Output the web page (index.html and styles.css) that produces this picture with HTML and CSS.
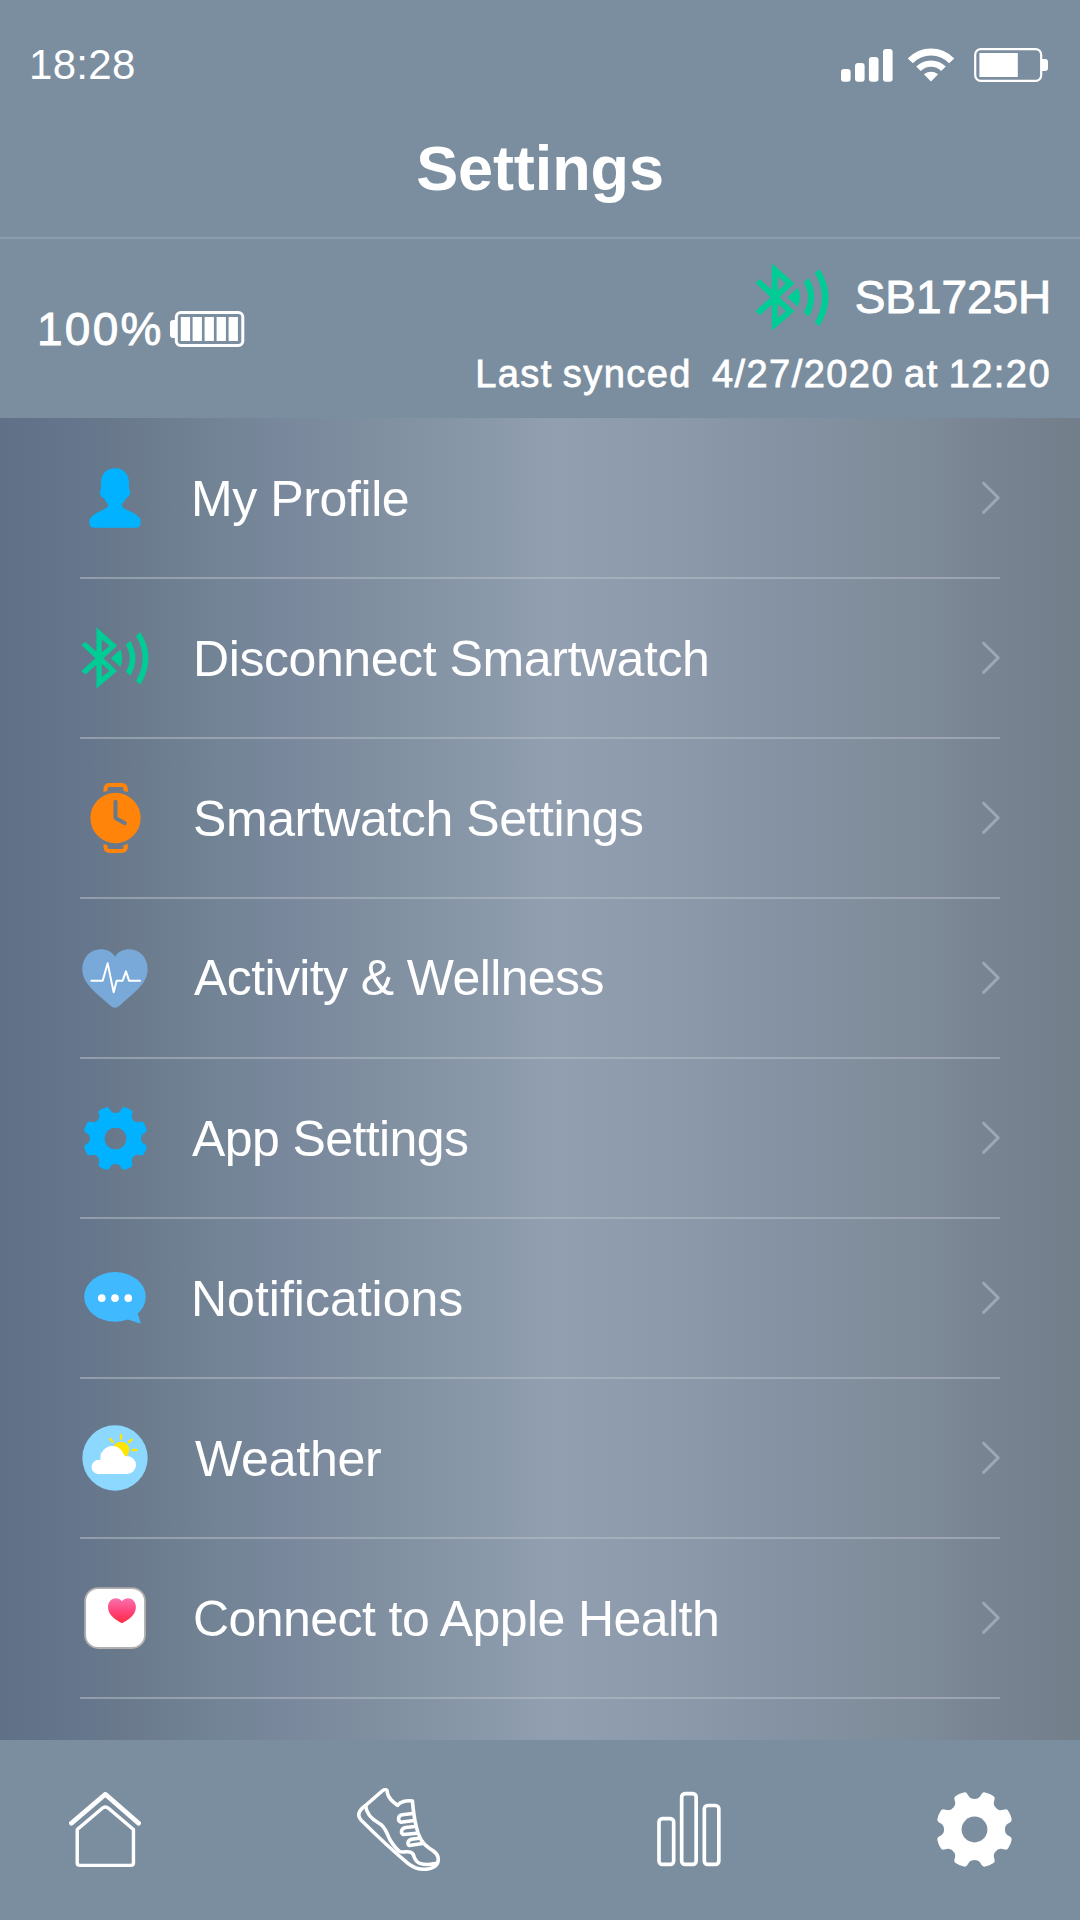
FILE: index.html
```html
<!DOCTYPE html>
<html lang="en">
<head>
<meta charset="utf-8">
<title>Settings</title>
<link rel="stylesheet" href="styles.css">
</head>
<body>
<svg class="sprite" aria-hidden="true">
  <defs>
    <symbol id="bluetooth" viewBox="64 561 203 185" preserveAspectRatio="none">
      <path fill="#00cc96" fill-rule="evenodd" d="M110 562L172 617L131 654L172 692L110 745L110 674L77 703L65 692L107 654L65 615L77 605L110 634ZM126 598L149 617L126 637ZM126 671L149 692L126 710Z"/>
      <path fill="#00cc96" d="M153 654L182 628Q192 654 182 680ZM211 602Q242 654 211 707L198 694Q221 654 198 614ZM241 577Q290 654 241 733L228 722Q268 654 228 588Z"/>
    </symbol>
    <path id="tooth" d="M0 0L-2 0L-2 -91L0 -91C8 -91 14 -94 17 -99L22 -107Q26 -113 34 -110Q44 -108 53.7 -101.8Q61.5 -98.3 60.1 -91.2L58 -82.1C56.6 -76.4 58.7 -70 64.3 -64.3Z"/>
    <mask id="gear-hole" maskUnits="userSpaceOnUse" x="-120" y="-120" width="240" height="240">
      <rect x="-120" y="-120" width="240" height="240" fill="#fff"/>
      <circle r="38.5" fill="#000"/>
    </mask>
    <symbol id="gear" viewBox="-112 -112 224 224">
      <g mask="url(#gear-hole)">
        <use href="#tooth"/>
        <use href="#tooth" transform="rotate(45)"/>
        <use href="#tooth" transform="rotate(90)"/>
        <use href="#tooth" transform="rotate(135)"/>
        <use href="#tooth" transform="rotate(180)"/>
        <use href="#tooth" transform="rotate(225)"/>
        <use href="#tooth" transform="rotate(270)"/>
        <use href="#tooth" transform="rotate(315)"/>
      </g>
    </symbol>
    <symbol id="chevron" viewBox="0 0 18 34">
      <path d="M1.6 2.2L16.2 16.8L1.6 31.4" fill="none" stroke="#9ba9b3" stroke-width="3" stroke-linecap="round" stroke-linejoin="round"/>
    </symbol>
  </defs>
</svg>

<div class="screen">
  <header class="header">
    <div class="status">
      <span class="time">18:28</span>
      <div class="status-icons">
        <svg class="signal" viewBox="0 0 52 34" width="52" height="34" fill="#fff">
          <rect x="0" y="21" width="9.6" height="12.7" rx="3"/><rect x="14" y="15" width="9.6" height="18.7" rx="3"/><rect x="27.9" y="9" width="9.6" height="24.7" rx="3"/><rect x="42" y="1" width="9.6" height="32.7" rx="3"/>
        </svg>
        <svg class="wifi" viewBox="0 0 46 34" width="46" height="34">
          <path d="M2.4 12.9A28.3 28.3 0 0 1 43.6 12.9" fill="none" stroke="#fff" stroke-width="7"/>
          <path d="M10.5 20.8A17.6 17.6 0 0 1 35.5 20.8" fill="none" stroke="#fff" stroke-width="6.4"/>
          <path d="M15.9 26.2Q23 21.4 30.1 26.2L23 33.6Z" fill="#fff"/>
        </svg>
        <svg class="battery" viewBox="0 0 75 34" width="75" height="34">
          <rect x="1.2" y="1.2" width="66" height="31.6" rx="5.5" fill="none" stroke="#fff" stroke-width="2.2"/>
          <rect x="5.4" y="5" width="38.4" height="24" fill="#fff"/>
          <path d="M68 11H71Q74 11 74 14V20Q74 23 71 23H68Z" fill="#fff"/>
        </svg>
      </div>
    </div>
    <h1 class="title">Settings</h1>
  </header>

  <section class="device">
    <div class="charge">
      <span class="charge-value">100%</span>
      <svg viewBox="0 0 75 36" width="75" height="36" fill="#fff">
        <rect x="6.3" y="1.5" width="66.5" height="33" rx="4.5" fill="none" stroke="#fff" stroke-width="3"/>
        <path d="M5 9H3Q0 9 0 12V24Q0 27 3 27H5Z"/>
        <rect x="10.8" y="6" width="9.3" height="24"/><rect x="22.6" y="6" width="9.3" height="24"/><rect x="34.6" y="6" width="9.3" height="24"/><rect x="46.6" y="6" width="9.3" height="24"/><rect x="58.6" y="6" width="9.3" height="24"/>
      </svg>
    </div>
    <div class="watch">
      <div class="watch-name">
        <svg class="watch-link"><use href="#bluetooth"/></svg>
        <span>SB1725H</span>
      </div>
      <div class="synced">Last synced&nbsp; 4/27/2020 at 12:20</div>
    </div>
  </section>

  <main class="panel">
    <a class="row row-profile">
      <span class="icon"><svg viewBox="87 84 156 179" width="52" height="60"><path fill="#00b2ff" d="M165 84C140 84 123 102 123 128L123 148C117 151 119 168 128 172C132 174 134 177 136 182C140 189 145 190 144 196C142 208 120 211 104 222C92 230 88 236 88 245C88 257 92 263 104 263L226 263C238 263 242 257 242 245C242 236 238 230 226 222C210 211 188 208 186 196C185 190 190 189 194 182C196 177 198 174 202 172C211 168 213 151 207 148L207 128C207 102 190 84 165 84Z"/></svg></span>
      <span class="label">My Profile</span><svg class="chevron"><use href="#chevron"/></svg>
    </a>
    <a class="row row-disconnect">
      <span class="icon"><svg class="bt-small"><use href="#bluetooth"/></svg></span>
      <span class="label">Disconnect Smartwatch</span><svg class="chevron"><use href="#chevron"/></svg>
    </a>
    <a class="row row-watch">
      <span class="icon"><svg viewBox="89 1029 152 210" width="51" height="70">
        <mask id="hands" maskUnits="userSpaceOnUse" x="80" y="1020" width="170" height="230"><rect x="80" y="1020" width="170" height="230" fill="#fff"/><path d="M165 1085V1134L193 1150" fill="none" stroke="#000" stroke-width="12" stroke-linecap="round" stroke-linejoin="round"/></mask>
        <g fill="#ff8409"><circle cx="165" cy="1134" r="75.5" mask="url(#hands)"/>
        <path id="strap" d="M129 1056V1046Q131 1029 147 1029H184Q200 1029 202 1046V1056L189 1052V1046Q189 1041 184 1041H147Q141 1041 141 1046V1052Z"/>
        <use href="#strap" transform="matrix(1 0 0 -1 0 2268)"/></g>
      </svg></span>
      <span class="label">Smartwatch Settings</span><svg class="chevron"><use href="#chevron"/></svg>
    </a>
    <a class="row row-wellness">
      <span class="icon"><svg viewBox="66 145 198 177" width="66" height="59"><path fill="#78a9d8" d="M165 168C155 153 140 146 122 146C91 146 67 171 67 206C67 246 100 270 151 315Q165 327 179 315C230 270 263 246 263 206C263 171 239 146 208 146C190 146 175 153 165 168Z"/><path d="M94 240H128L143 188L161 275L170 240H188L198 212L207 240H240" fill="none" stroke="#fff" stroke-width="6" stroke-linecap="round" stroke-linejoin="round"/></svg></span>
      <span class="label">Activity &amp; Wellness</span><svg class="chevron"><use href="#chevron"/></svg>
    </a>
    <a class="row row-app">
      <span class="icon"><svg class="gear-small"><use href="#gear"/></svg></span>
      <span class="label">App Settings</span><svg class="chevron"><use href="#chevron"/></svg>
    </a>
    <a class="row row-notifications">
      <span class="icon"><svg viewBox="72 95 186 157" width="62" height="52"><ellipse cx="165" cy="170" rx="93" ry="75" fill="#41b9ff"/><path d="M233 218L243 251L198 236Z" fill="#41b9ff"/><g fill="#fff"><circle cx="125" cy="174" r="11.5"/><circle cx="165" cy="174" r="11.5"/><circle cx="205" cy="174" r="11.5"/></g></svg></span>
      <span class="label">Notifications</span><svg class="chevron"><use href="#chevron"/></svg>
    </a>
    <a class="row row-weather">
      <span class="icon"><svg viewBox="66 555 198 198" width="66" height="66"><circle cx="165" cy="654" r="98" fill="#8cd8ff"/><circle cx="183" cy="630" r="25" fill="#ffe600"/><path d="M183 585V596M151 597L158 605M215 599L207 606M218 630H229" stroke="#ffe600" stroke-width="7" stroke-linecap="round"/><g fill="#fff"><circle cx="116" cy="681" r="21.5"/><circle cx="157" cy="653" r="35"/><circle cx="201" cy="675" r="27"/><path d="M116 660H122V640H190L200 660V702H116Z"/></g></svg></span>
      <span class="label">Weather</span><svg class="chevron"><use href="#chevron"/></svg>
    </a>
    <a class="row row-health">
      <span class="icon"><svg viewBox="72 1040 186 187" width="62" height="62"><linearGradient id="heart" x2="0" y2="1"><stop stop-color="#f673ad"/><stop offset=".55" stop-color="#ff4277"/><stop offset="1" stop-color="#fd2d42"/></linearGradient><rect x="75" y="1043.5" width="180.5" height="180.5" rx="39" fill="#fff" stroke="#b2b0af" stroke-width="5.5"/><path fill="url(#heart)" d="M186 1083C176 1068 144 1070 144 1101C144 1125 168 1140 186 1149C204 1140 228 1125 228 1101C228 1070 196 1068 186 1083Z"/></svg></span>
      <span class="label">Connect to Apple Health</span><svg class="chevron"><use href="#chevron"/></svg>
    </a>
  </main>

  <nav class="tabs">
    <svg class="tab-home" viewBox="200 215 210 226" preserveAspectRatio="none" fill="none" stroke="#fff" stroke-linecap="round" stroke-linejoin="round">
      <path stroke-width="14" d="M207 309L306 222L403 309"/>
      <path stroke-width="10" d="M224 328L297 264Q306 256 315 264L388 328V428Q388 436 380 436H232Q224 436 224 428Z"/>
    </svg>
    <svg class="tab-shoe" viewBox="1040 205 241 248" preserveAspectRatio="none" fill="none" stroke="#fff" stroke-width="10.5" stroke-linecap="round" stroke-linejoin="round">
      <path d="M1064 258L1113 214C1122 206 1129 210 1128 219C1131 236 1144 246 1158 257C1165 246 1183 241 1201 244C1203 270 1205 290 1212 320C1217 345 1230 372 1250 385C1268 396 1276 404 1276 418C1276 438 1258 448 1236 448C1215 448 1200 440 1188 430C1150 398 1090 340 1052 301C1040 288 1044 272 1064 258Z"/>
      <path d="M1065 258C1067 285 1085 300 1105 311C1125 323 1125 340 1137 362C1147 378 1155 388 1164 395C1178 400 1196 388 1203 403C1208 415 1208 425 1222 430C1237 435 1260 433 1273 430"/>
      <path d="M1202 281L1172 285C1158 287 1158 303 1167 307L1206 302M1208 320L1182 323C1167 325 1166 341 1175 344L1214 340M1220 355L1198 358C1186 361 1186 374 1192 377L1230 371"/>
    </svg>
    <svg class="tab-stats" viewBox="172 215 192 227" fill="none" stroke="#fff" stroke-width="11">
      <rect x="178" y="297.5" width="44" height="137" rx="10"/><rect x="246" y="222.5" width="43.500" height="212" rx="10"/><rect x="314" y="258" width="43.500" height="176.500" rx="10"/>
    </svg>
    <svg class="tab-settings"><use href="#gear"/></svg>
  </nav>
</div>
</body>
</html>
```
FILE: styles.css
```css
* { box-sizing: border-box; }

body {
  margin: 0;
  color: #fff;
  font-family: "Liberation Sans", Arial, sans-serif;
}

svg { display: block; flex: none; }

.sprite { position: absolute; width: 0; height: 0; }

.screen {
  display: flex;
  flex-direction: column;
  width: 1080px;
  height: 1920px;
  overflow: hidden;
  background: #7b8e9f;
}

.header {
  height: 239px;
  border-bottom: 2px solid #8c9cac;
}

.status {
  display: flex;
  align-items: center;
  justify-content: space-between;
  height: 129px;
  padding: 0 31px 0 29px;
}

.time { font-size: 42px; letter-spacing: 0.3px; }

.status-icons { display: flex; align-items: center; padding-top: 1px; }
.wifi { margin-left: 15px; }
.battery { margin-left: 20px; }

.title {
  margin: 0;
  font-size: 63px;
  line-height: 79px;
  letter-spacing: -0.1px;
  text-align: center;
}

.device {
  display: flex;
  justify-content: space-between;
  height: 179px;
  padding: 0 29px 0 37px;
  white-space: nowrap;
}

.charge { display: flex; align-items: center; gap: 6px; }

.charge-value {
  font-size: 46px;
  letter-spacing: 2.25px;
  -webkit-text-stroke: 0.9px #fff;
}

.watch-name {
  display: flex;
  align-items: center;
  justify-content: flex-end;
  gap: 26px;
  height: 115px;
  font-size: 46px;
  letter-spacing: -0.1px;
  -webkit-text-stroke: 0.9px #fff;
}

.watch-link { width: 74px; height: 68px; }

.synced {
  font-size: 38px;
  line-height: 40px;
  letter-spacing: 1.45px;
  word-spacing: -2px;
  text-align: right;
  -webkit-text-stroke: 0.8px #fff;
}

.panel {
  height: 1322px;
  padding: 1px 80px 0;
  background: linear-gradient(90deg,
    #607187 0, #66768c 90px, #69798b 115px, #728495 225px,
    #77869a 265px, #7c8b9e 330px, #7f8fa0 370px, #8595a5 440px,
    #8b9aab 500px, #929fb0 555px, #8c99aa 680px,
    #8592a4 780px, #818f9e 845px, #7d8a97 930px, #798593 970px,
    #727e8a 1080px);
}

.row {
  display: flex;
  align-items: center;
  height: 160px;
  border-bottom: 2px solid rgba(187, 194, 204, 0.5);
}

.icon {
  display: flex;
  justify-content: center;
  width: 70px;
}

.label {
  flex: 1;
  padding: 1px 0 0 43px;
  font-size: 50px;
  line-height: 58px;
  white-space: nowrap;
}

.row-profile .label { padding: 2px 0 0 41px; letter-spacing: -0.4px; }
.row-disconnect .label { padding-top: 2px; letter-spacing: -0.42px; }
.row-watch .label { letter-spacing: -0.42px; }
.row-wellness .label { padding: 0 0 0 44px; letter-spacing: -0.61px; }
.row-app .label { padding-left: 42px; letter-spacing: -0.6px; }
.row-notifications .label { padding-left: 41px; letter-spacing: 0; }
.row-weather .label { padding-left: 45px; letter-spacing: -0.23px; }
.row-health .label { padding-top: 2px; letter-spacing: -0.57px; }

.bt-small { width: 68px; height: 62px; }
.gear-small { width: 63px; height: 63px; fill: #00b2ff; }
.chevron { width: 18px; height: 34px; }

.tabs {
  display: flex;
  flex: 1;
  justify-content: space-between;
  align-items: center;
  padding: 0 68px 2px 69px;
}

.tab-home { width: 72px; height: 75px; }
.tab-shoe { width: 83px; height: 83px; }
.tab-stats { width: 64px; height: 76px; }
.tab-settings { width: 75px; height: 75px; fill: #fff; }
```
